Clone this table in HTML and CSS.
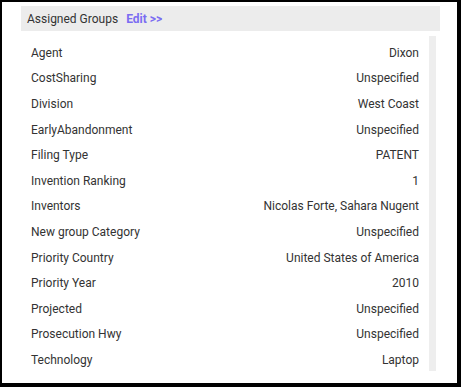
FILE: index.html
```html
<!DOCTYPE html>
<html lang="en">
<head>
    <meta charset="UTF-8">
    <title>Assigned Groups</title>
    <link rel="stylesheet" href="styles.css">
</head>
<body>

    <div class="frame">
        <div class="group-header">
            <span class="group-title">Assigned Groups</span>
            <a class="group-edit" href="#">Edit &gt;&gt;</a>
        </div>

        <div class="group-body">
            <div class="group-rows">
                <div class="row"><span>Agent</span><span>Dixon</span></div>
                <div class="row"><span>CostSharing</span><span>Unspecified</span></div>
                <div class="row"><span>Division</span><span>West Coast</span></div>
                <div class="row"><span>EarlyAbandonment</span><span>Unspecified</span></div>
                <div class="row"><span>Filing Type</span><span>PATENT</span></div>
                <div class="row"><span>Invention Ranking</span><span>1</span></div>
                <div class="row"><span>Inventors</span><span>Nicolas Forte, Sahara Nugent</span></div>
                <div class="row"><span>New group Category</span><span>Unspecified</span></div>
                <div class="row"><span>Priority Country</span><span>United States of America</span></div>
                <div class="row"><span>Priority Year</span><span>2010</span></div>
                <div class="row"><span>Projected</span><span>Unspecified</span></div>
                <div class="row"><span>Prosecution Hwy</span><span>Unspecified</span></div>
                <div class="row"><span>Technology</span><span>Laptop</span></div>
            </div>
            <div class="track"></div>
        </div>
    </div>

</body>
</html>
```

FILE: styles.css
```css
* {
    box-sizing: border-box;
}

body {
    margin: 0;
    font-family: Roboto, "Liberation Sans", sans-serif;
    font-size: 12px;
    color: #333;
    background: #fff;
}

.frame {
    width: 461px;
    height: 387px;
    border: solid #000;
    border-width: 2px 4px 4px 2px;
    padding: 4px 0 0 19px;
    overflow: hidden;
}

.group-header {
    width: 419px;
    height: 25px;
    background: #ececec;
    display: flex;
    align-items: center;
    padding-left: 6px;
}

.group-title {
    color: #333;
}

.group-edit {
    margin-left: 8px;
    color: #7b6cf2;
    font-weight: bold;
    text-decoration: none;
}

.group-body {
    display: flex;
    width: 415px;
    height: 335px;
    margin-top: 5px;
}

.group-rows {
    flex: 1;
    padding: 4px 10px 0 10px;
}

.row {
    height: 25.6px;
    display: flex;
    justify-content: space-between;
    align-items: center;
}

.track {
    width: 7px;
    background: #eeeeee;
}
```
